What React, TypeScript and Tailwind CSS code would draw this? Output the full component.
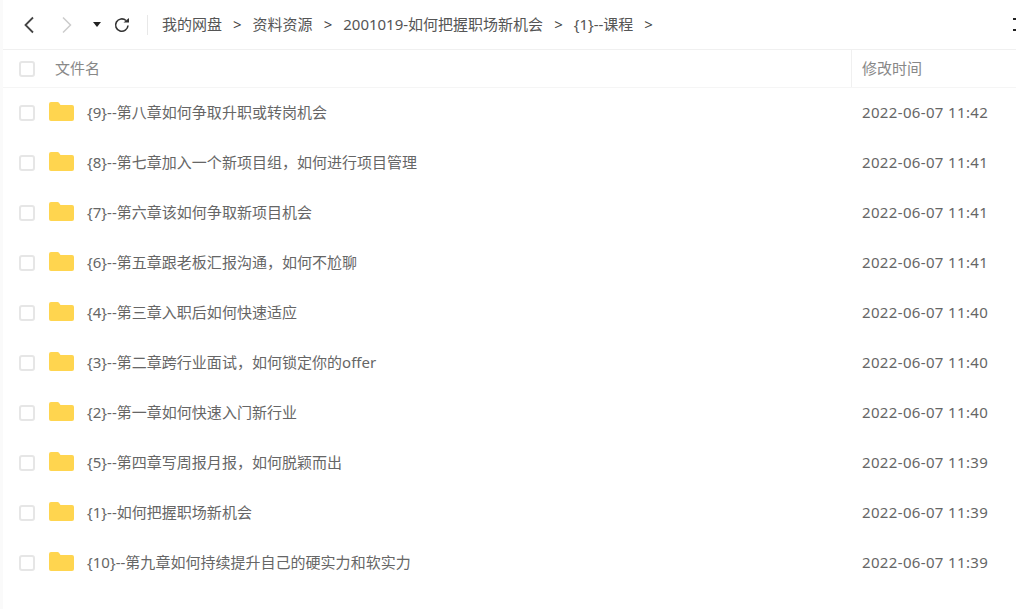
import React from 'react';

const rows = [
    ['{9}--第八章如何争取升职或转岗机会', '2022-06-07 11:42'],
    ['{8}--第七章加入一个新项目组，如何进行项目管理', '2022-06-07 11:41'],
    ['{7}--第六章该如何争取新项目机会', '2022-06-07 11:41'],
    ['{6}--第五章跟老板汇报沟通，如何不尬聊', '2022-06-07 11:41'],
    ['{4}--第三章入职后如何快速适应', '2022-06-07 11:40'],
    ['{3}--第二章跨行业面试，如何锁定你的offer', '2022-06-07 11:40'],
    ['{2}--第一章如何快速入门新行业', '2022-06-07 11:40'],
    ['{5}--第四章写周报月报，如何脱颖而出', '2022-06-07 11:39'],
    ['{1}--如何把握职场新机会', '2022-06-07 11:39'],
    ['{10}--第九章如何持续提升自己的硬实力和软实力', '2022-06-07 11:39'],
];

const crumbs = ['我的网盘', '资料资源', '2001019-如何把握职场新机会', '{1}--课程'];

const Checkbox = () => <div className="w-4 h-4 rounded-[3px] border-2 border-[#e6e6e6] bg-white shrink-0" />;

const Folder = () => (
    <svg width="25" height="19" viewBox="0 0 25 19" className="shrink-0">
        <path d="M0 2A2 2 0 0 1 2 0h6.5a2 2 0 0 1 1.5.7L11.5 3H23a2 2 0 0 1 2 2v12a2 2 0 0 1-2 2H2a2 2 0 0 1-2-2z" fill="#ffd54f" />
    </svg>
);

const App: React.FC = () => {
    return (
        <div className="w-[1016px] h-[609px] overflow-hidden bg-[#fafafa] pl-[3px] text-[#666] text-[15px]" style={{ fontFamily: '"Noto Sans", "Noto Sans CJK SC", sans-serif' }}>
            <div className="h-full bg-white">
                <div className="h-[50px] flex items-center border-b border-[#f0f0f0] relative">
                    <svg width="14" height="18" viewBox="0 0 14 18" className="ml-[19px] shrink-0" fill="none" stroke="#444" strokeWidth="1.8">
                        <path d="M11 1.5 3.5 9 11 16.5" />
                    </svg>
                    <svg width="14" height="18" viewBox="0 0 14 18" className="ml-[24px] shrink-0" fill="none" stroke="#ccc" strokeWidth="1.5">
                        <path d="M3 1.5 10.5 9 3 16.5" />
                    </svg>
                    <svg width="8" height="5" viewBox="0 0 8 5" className="ml-[19px] shrink-0"><path d="M0 0h8L4 5z" fill="#222" /></svg>
                    <svg width="18" height="18" viewBox="0 0 18 18" className="ml-[12px] shrink-0" fill="none" stroke="#333" strokeWidth="1.6">
                        <path d="M15 9.5A6.2 6.2 0 1 1 13 4.5" />
                        <path d="M10.5 6.5H16V2z" fill="#333" stroke="none" />
                    </svg>
                    <div className="w-px h-5 bg-[#e8e8e8] ml-[16px] mr-[14px]" />
                    <div className="flex items-center text-[#555]">
                        {crumbs.map(c => (
                            <React.Fragment key={c}>
                                <span>{c}</span>
                                <span className="mx-[11px] text-[#444]">&gt;</span>
                            </React.Fragment>
                        ))}
                    </div>
                    <span className="absolute right-0 top-[18px] w-[3px] h-[13px] border-y-2 border-[#222]" />
                </div>
                <div className="h-[38px] flex items-center border-b border-[#f5f5f5] text-[#888]">
                    <div className="w-[849px] h-full flex items-center pl-[16px] border-r border-[#f0f0f0]">
                        <Checkbox />
                        <span className="ml-[20px] -mt-px">文件名</span>
                    </div>
                    <span className="ml-[10px] -mt-px">修改时间</span>
                </div>
                {rows.map(([name, time]) => (
                    <div key={name} className="h-[50px] flex items-center">
                        <div className="w-[849px] flex items-center pl-[16px]">
                            <Checkbox />
                            <div className="ml-[14px] -mt-[3px]"><Folder /></div>
                            <span className="ml-[13px] -mt-px tracking-[0.02px]">{name}</span>
                        </div>
                        <span className="ml-[10px] -mt-px tracking-[0.35px]">{time}</span>
                    </div>
                ))}
            </div>
        </div>
    );
};

export default App;
